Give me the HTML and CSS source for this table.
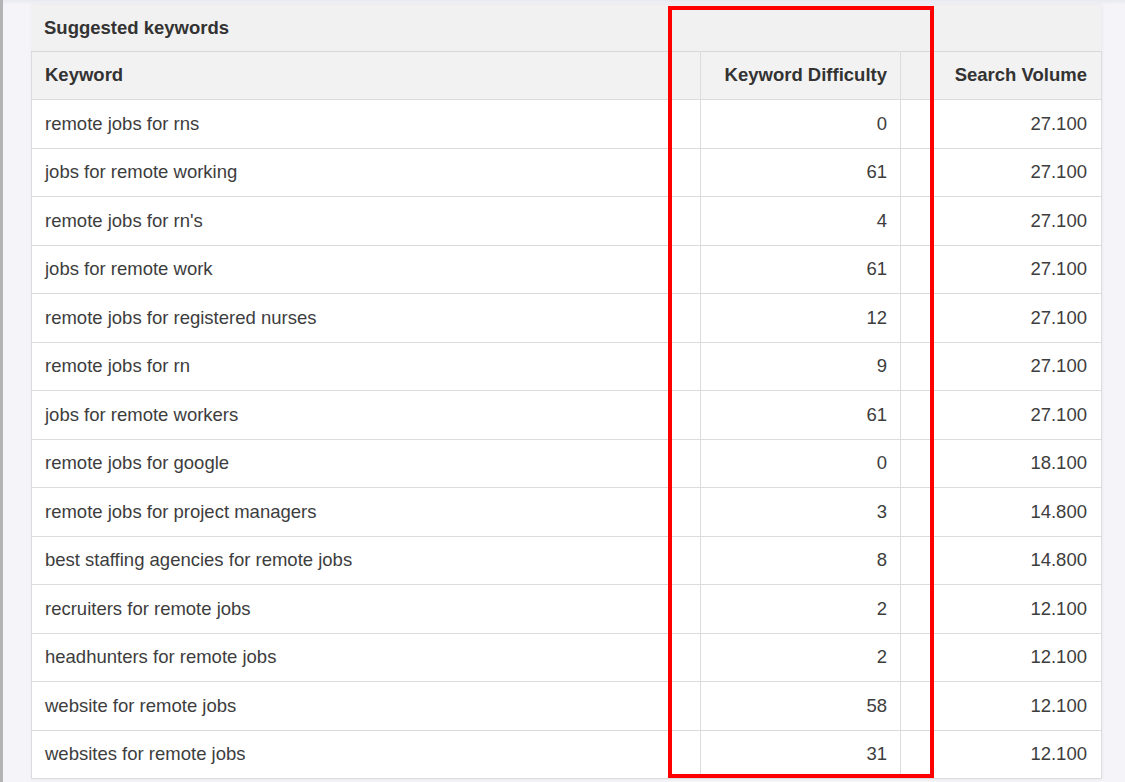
FILE: index.html
```html
<!DOCTYPE html>
<html>
<head>
<meta charset="utf-8">
<link rel="stylesheet" href="styles.css">
</head>
<body>
<div class="page">
  <div class="edge"></div>
  <div class="content">
    <section class="card">
      <h2 class="card-title">Suggested keywords</h2>
      <table class="kw-table">
        <colgroup>
          <col class="c-kw"><col class="c-kd"><col class="c-sv">
        </colgroup>
        <thead>
          <tr><th class="left">Keyword</th><th>Keyword Difficulty</th><th class="last">Search Volume</th></tr>
        </thead>
        <tbody>
          <tr><td class="left">remote jobs for rns</td><td>0</td><td class="last">27.100</td></tr>
          <tr><td class="left">jobs for remote working</td><td>61</td><td class="last">27.100</td></tr>
          <tr><td class="left">remote jobs for rn's</td><td>4</td><td class="last">27.100</td></tr>
          <tr><td class="left">jobs for remote work</td><td>61</td><td class="last">27.100</td></tr>
          <tr><td class="left">remote jobs for registered nurses</td><td>12</td><td class="last">27.100</td></tr>
          <tr><td class="left">remote jobs for rn</td><td>9</td><td class="last">27.100</td></tr>
          <tr><td class="left">jobs for remote workers</td><td>61</td><td class="last">27.100</td></tr>
          <tr><td class="left">remote jobs for google</td><td>0</td><td class="last">18.100</td></tr>
          <tr><td class="left">remote jobs for project managers</td><td>3</td><td class="last">14.800</td></tr>
          <tr><td class="left">best staffing agencies for remote jobs</td><td>8</td><td class="last">14.800</td></tr>
          <tr><td class="left">recruiters for remote jobs</td><td>2</td><td class="last">12.100</td></tr>
          <tr><td class="left">headhunters for remote jobs</td><td>2</td><td class="last">12.100</td></tr>
          <tr><td class="left">website for remote jobs</td><td>58</td><td class="last">12.100</td></tr>
          <tr><td class="left">websites for remote jobs</td><td>31</td><td class="last">12.100</td></tr>
        </tbody>
      </table>
    </section>
  </div>
  <div class="highlight"></div>
</div>
</body>
</html>
```
FILE: styles.css
```css
html, body {
  margin: 0;
  padding: 0;
  height: 100%;
  overflow: hidden;
  background: #f4f4f9;
}
.page {
  position: relative;
  display: flex;
  height: 782px;
  font-family: "Liberation Sans", Arial, sans-serif;
  color: #3b3b3b;
  background: linear-gradient(#e9e9f1 0, #f4f4f9 5px);
}
.edge {
  width: 3px;
  flex: none;
  background: #b3b3b5;
}
.content {
  padding: 5px 0 0 28px;
  flex: 1;
}
.card {
  width: 1070px;
  background: #f1f1f1;
  box-shadow: 1px 0 4px rgba(0, 0, 0, 0.06);
}
.card-title {
  margin: 0;
  height: 46px;
  box-sizing: border-box;
  padding: 12px 13px 0;
  font-size: 18.5px;
  font-weight: bold;
  color: #333;
  line-height: 22px;
}
.kw-table {
  width: 1070px;
  border-collapse: collapse;
  table-layout: fixed;
  font-size: 18.5px;
}
.c-kw { width: 669px; }
.c-kd { width: 200px; }
.c-sv { width: 201px; }
.kw-table th,
.kw-table td {
  border: 1px solid #dcdcdc;
  padding: 0 13px 0 13px;
  text-align: right;
  white-space: nowrap;
}
.kw-table th {
  height: 48px;
  padding-bottom: 2px;
  box-sizing: border-box;
  background: #f2f2f2;
  font-weight: bold;
  color: #333;
  border-top-color: #d8d8d8;
}
.kw-table td {
  height: 47.5px;
  background: #fff;
  color: #3d3d3d;
}
.kw-table .left {
  text-align: left;
}
.kw-table .last {
  padding-right: 14px;
}
.highlight {
  position: absolute;
  left: 668px;
  top: 6px;
  width: 266px;
  height: 772px;
  box-sizing: border-box;
  border: 4px solid #ff0000;
  pointer-events: none;
}
```
